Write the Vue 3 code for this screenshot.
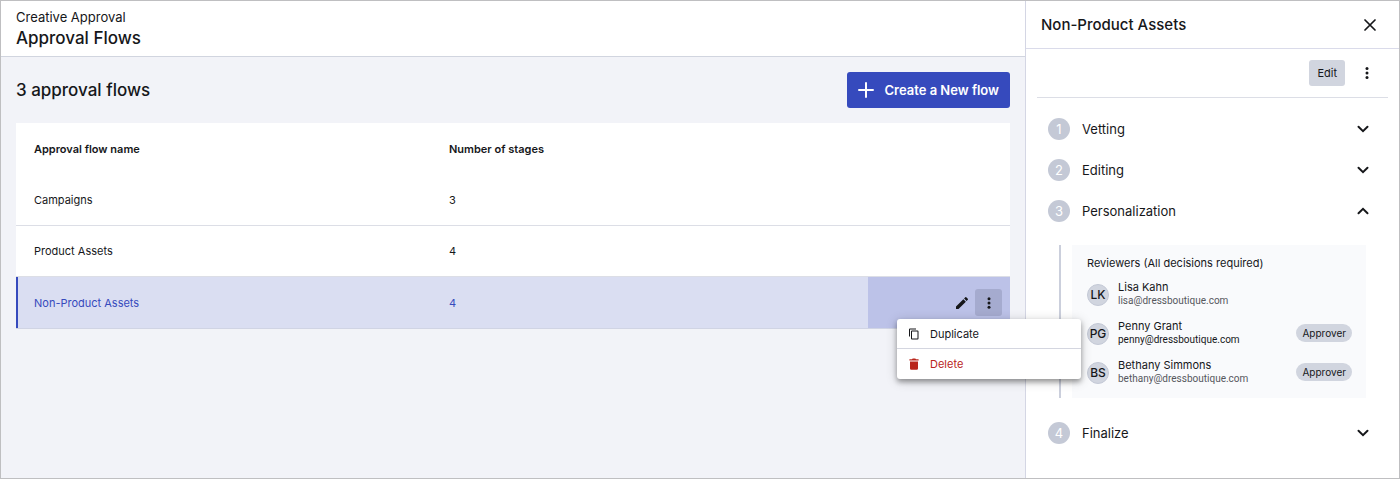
<script setup>
import { ref } from 'vue'

const flows = [
  { name: 'Campaigns', stages: 3 },
  { name: 'Product Assets', stages: 4 },
  { name: 'Non-Product Assets', stages: 4 }
]
const selected = ref('Non-Product Assets')
const menuOpen = ref(true)
const openStep = ref(3)

const steps = [
  { id: 1, name: 'Vetting' },
  { id: 2, name: 'Editing' },
  {
    id: 3,
    name: 'Personalization',
    reviewers: [
      { initials: 'LK', name: 'Lisa Kahn', email: 'lisa@dressboutique.com', muted: true },
      { initials: 'PG', name: 'Penny Grant', email: 'penny@dressboutique.com', approver: true },
      { initials: 'BS', name: 'Bethany Simmons', email: 'bethany@dressboutique.com', approver: true, muted: true }
    ]
  },
  { id: 4, name: 'Finalize' }
]

function toggle(id) {
  openStep.value = openStep.value === id ? null : id
}
</script>

<template>
  <div class="app">
    <main class="main">
      <header class="page-header">
        <div class="crumb">Creative Approval</div>
        <h1>Approval Flows</h1>
      </header>
      <section class="content">
        <div class="bar">
          <h2>3 approval flows</h2>
          <button class="create" type="button">
            <svg width="16" height="16" viewBox="0 0 16 16" aria-hidden="true">
              <path d="M8 1v14M1 8h14" stroke="currentColor" stroke-width="2" stroke-linecap="round" />
            </svg>
            Create a New flow
          </button>
        </div>
        <table class="flows">
          <thead>
            <tr>
              <th class="col-name" scope="col">Approval flow name</th>
              <th scope="col">Number of stages</th>
              <td class="col-actions"></td>
            </tr>
          </thead>
          <tbody>
            <tr
              v-for="flow in flows"
              :key="flow.name"
              :class="{ selected: flow.name === selected }"
              @click="selected = flow.name"
            >
              <td>{{ flow.name }}</td>
              <td>{{ flow.stages }}</td>
              <td class="col-actions">
                <div v-if="flow.name === selected" class="actions">
                  <button class="icon-btn" type="button" aria-label="Edit flow">
                    <svg width="16" height="16" viewBox="0 0 24 24" aria-hidden="true">
                      <path fill="currentColor" d="M3 17.25V21h3.75L17.81 9.94l-3.75-3.75L3 17.25zM20.71 7.04a1 1 0 0 0 0-1.41l-2.34-2.34a1 1 0 0 0-1.41 0l-1.83 1.83 3.75 3.75 1.83-1.83z" />
                    </svg>
                  </button>
                  <div class="menu-anchor">
                    <button
                      class="icon-btn active"
                      type="button"
                      aria-label="More actions"
                      :aria-expanded="menuOpen"
                      @click.stop="menuOpen = !menuOpen"
                    >
                      <svg width="16" height="16" viewBox="0 0 16 16" fill="currentColor" aria-hidden="true">
                        <circle cx="8" cy="3.7" r="1.5" /><circle cx="8" cy="8" r="1.5" /><circle cx="8" cy="12.3" r="1.5" />
                      </svg>
                    </button>
                    <div v-if="menuOpen" class="menu">
                      <button type="button">
                        <svg width="12" height="12" viewBox="0 0 24 24" aria-hidden="true">
                          <path fill="currentColor" d="M16 1H4a2 2 0 0 0-2 2v14h2V3h12V1zm3 4H8a2 2 0 0 0-2 2v14a2 2 0 0 0 2 2h11a2 2 0 0 0 2-2V7a2 2 0 0 0-2-2zm0 16H8V7h11v14z" />
                        </svg>
                        Duplicate
                      </button>
                      <button class="danger" type="button">
                        <svg width="12" height="12" viewBox="0 0 12 12" fill="currentColor" aria-hidden="true">
                          <path d="M2 3.4h8v7.1a1.3 1.3 0 0 1-1.3 1.3H3.3A1.3 1.3 0 0 1 2 10.5zM1.4 1.2H4L4.7.5h2.6l.7.7h2.6v1.4H1.4z" />
                        </svg>
                        Delete
                      </button>
                    </div>
                  </div>
                </div>
              </td>
            </tr>
          </tbody>
        </table>
      </section>
    </main>

    <aside class="panel">
      <header class="panel-header">
        <h2>Non-Product Assets</h2>
        <button class="plain" type="button" aria-label="Close">
          <svg width="12" height="12" viewBox="0 0 12 12" aria-hidden="true">
            <path d="M1 1l10 10M11 1L1 11" stroke="currentColor" stroke-width="1.7" stroke-linecap="round" />
          </svg>
        </button>
      </header>
      <div class="toolbar">
        <button class="edit" type="button">Edit</button>
        <button class="plain" type="button" aria-label="More options">
          <svg width="16" height="16" viewBox="0 0 16 16" fill="currentColor" aria-hidden="true">
            <circle cx="8" cy="3.6" r="1.5" /><circle cx="8" cy="8" r="1.5" /><circle cx="8" cy="12.4" r="1.5" />
          </svg>
        </button>
      </div>
      <ol class="steps">
        <li v-for="step in steps" :key="step.id">
          <button class="step" type="button" :aria-expanded="openStep === step.id" @click="toggle(step.id)">
            <span class="num">{{ step.id }}</span>
            <span class="step-name">{{ step.name }}</span>
            <svg width="12" height="8" viewBox="0 0 12 8" fill="none" aria-hidden="true">
              <path
                :d="openStep === step.id ? 'M1.5 6.2L6 1.9l4.5 4.3' : 'M1.5 1.8L6 6.1l4.5-4.3'"
                stroke="currentColor"
                stroke-width="2"
                stroke-linecap="round"
              />
            </svg>
          </button>
          <div v-if="step.reviewers && openStep === step.id" class="details">
            <div class="card">
              <h3>Reviewers (All decisions required)</h3>
              <div v-for="r in step.reviewers" :key="r.email" class="reviewer">
                <span class="avatar">{{ r.initials }}</span>
                <div class="who">
                  <div class="name">{{ r.name }}</div>
                  <div class="email" :class="{ muted: r.muted }">{{ r.email }}</div>
                </div>
                <span v-if="r.approver" class="badge">Approver</span>
              </div>
            </div>
          </div>
        </li>
      </ol>
    </aside>
  </div>
</template>

<style>
body {
  margin: 0;
}
</style>

<style scoped>
.app {
  box-sizing: border-box;
  display: flex;
  min-height: 100vh;
  border: 1px solid #bfbfc1;
  background: #f2f3f8;
  color: #16171a;
  font-family: Inter, "Liberation Sans", sans-serif;
  font-size: 11px;
  line-height: 16px;
}
h1,
h2,
h3 {
  margin: 0;
  font-weight: 500;
}
button {
  margin: 0;
  border: 0;
  padding: 0;
  background: none;
  color: inherit;
  font: inherit;
  cursor: pointer;
}
svg {
  display: block;
  flex: none;
}
.main {
  flex: 1;
  min-width: 0;
}
.page-header {
  padding: 7px 15px 5px;
  border-bottom: 1px solid #d1d5df;
  background: #fff;
}
.crumb {
  font-size: 13px;
  line-height: 18px;
}
h1 {
  font-size: 17px;
  line-height: 25px;
}
.content {
  padding: 15px;
}
.bar {
  display: flex;
  align-items: center;
  justify-content: space-between;
  margin-bottom: 15px;
}
.bar h2 {
  font-size: 17px;
  line-height: 24px;
}
.create {
  display: flex;
  align-items: center;
  gap: 10px;
  height: 36px;
  padding: 0 11px;
  border-radius: 3px;
  background: #364abd;
  color: #fff;
  font-size: 13px;
  font-weight: 600;
}
.flows {
  width: 100%;
  table-layout: fixed;
  border-collapse: separate;
  border-spacing: 0;
  background: #fff;
}
th,
td {
  box-sizing: border-box;
  height: 51px;
  padding: 0 18px;
  text-align: left;
  vertical-align: middle;
}
th {
  height: 52px;
  font-weight: 600;
}
tbody td {
  border-bottom: 1px solid #dcdee6;
}
.col-name {
  width: 415px;
}
.col-actions {
  width: 142px;
  padding: 0 8px;
}
.selected td {
  height: 52px;
  border-color: #d0d4e4;
  background: #dadef2;
  color: #364abd;
}
.selected td:first-child {
  box-shadow: inset 2px 0 #364abd;
}
.selected .col-actions {
  background: #bcc2e8;
  color: #16171a;
}
.actions {
  display: flex;
  justify-content: flex-end;
}
.icon-btn {
  display: flex;
  align-items: center;
  justify-content: center;
  width: 27px;
  height: 27px;
  border-radius: 3px;
}
.icon-btn.active {
  background: #a5abcf;
}
.menu-anchor {
  position: relative;
}
.menu {
  position: absolute;
  top: 30px;
  right: -79px;
  z-index: 2;
  width: 184px;
  border-radius: 3px;
  background: #fff;
  box-shadow: 0 3px 5px rgba(0, 0, 0, 0.32), 0 2px 12px rgba(0, 0, 0, 0.2);
}
.menu button {
  display: flex;
  align-items: center;
  gap: 10px;
  width: 100%;
  height: 29px;
  padding: 0 11px;
}
.menu button + button {
  height: 31px;
  border-top: 1px solid #d4d6e0;
}
.menu .danger {
  color: #b9261c;
}
.panel {
  flex: none;
  width: 373px;
  border-left: 1px solid #d4d6e4;
  background: #fff;
}
.panel-header {
  display: flex;
  align-items: center;
  justify-content: space-between;
  height: 47px;
  padding: 0 23px 0 15px;
  border-bottom: 1px solid #dadbea;
}
.panel-header h2 {
  font-size: 15px;
  line-height: 20px;
}
.toolbar {
  display: flex;
  align-items: center;
  justify-content: flex-end;
  gap: 14px;
  height: 48px;
  margin: 0 11px;
  padding-right: 13px;
  border-bottom: 1px solid #dcdee6;
}
.edit {
  height: 26px;
  padding: 0 8px;
  border-radius: 3px;
  background: #d1d5df;
}
.steps {
  margin: 0;
  padding: 10px 30px 0 22px;
  list-style: none;
}
.step {
  display: flex;
  align-items: center;
  width: 100%;
  height: 41px;
  font-size: 13px;
  text-align: left;
}
.num {
  width: 22px;
  border-radius: 50%;
  background: #c4c9d6;
  color: #fff;
  font-size: 13px;
  line-height: 22px;
  text-align: center;
}
.step-name {
  flex: 1;
  margin-left: 12px;
}
.details {
  margin: 14px 3px 14px 11px;
  border-left: 2px solid #cbcfdc;
  padding-left: 11px;
}
.card {
  padding: 10px 14px 7px 15px;
  background: #f9fafc;
}
.card h3 {
  margin-bottom: 3px;
  font-size: 11px;
  font-weight: 400;
  line-height: 16px;
}
.reviewer {
  display: flex;
  align-items: center;
  height: 39px;
}
.avatar {
  box-sizing: border-box;
  width: 22px;
  margin-top: 2px;
  border: 1px solid #c4c9d6;
  border-radius: 50%;
  background: #d1d5df;
  font-size: 12px;
  font-weight: 500;
  line-height: 20px;
  text-align: center;
}
.who {
  flex: 1;
  margin-left: 9px;
}
.name {
  line-height: 14px;
}
.email {
  font-family: Roboto, "Liberation Sans", sans-serif;
  font-size: 10px;
  line-height: 13px;
}
.muted {
  color: #55575c;
}
.badge {
  padding: 0 6px;
  border-radius: 9px;
  background: #d1d5df;
  font-size: 10px;
  line-height: 18px;
}
</style>
